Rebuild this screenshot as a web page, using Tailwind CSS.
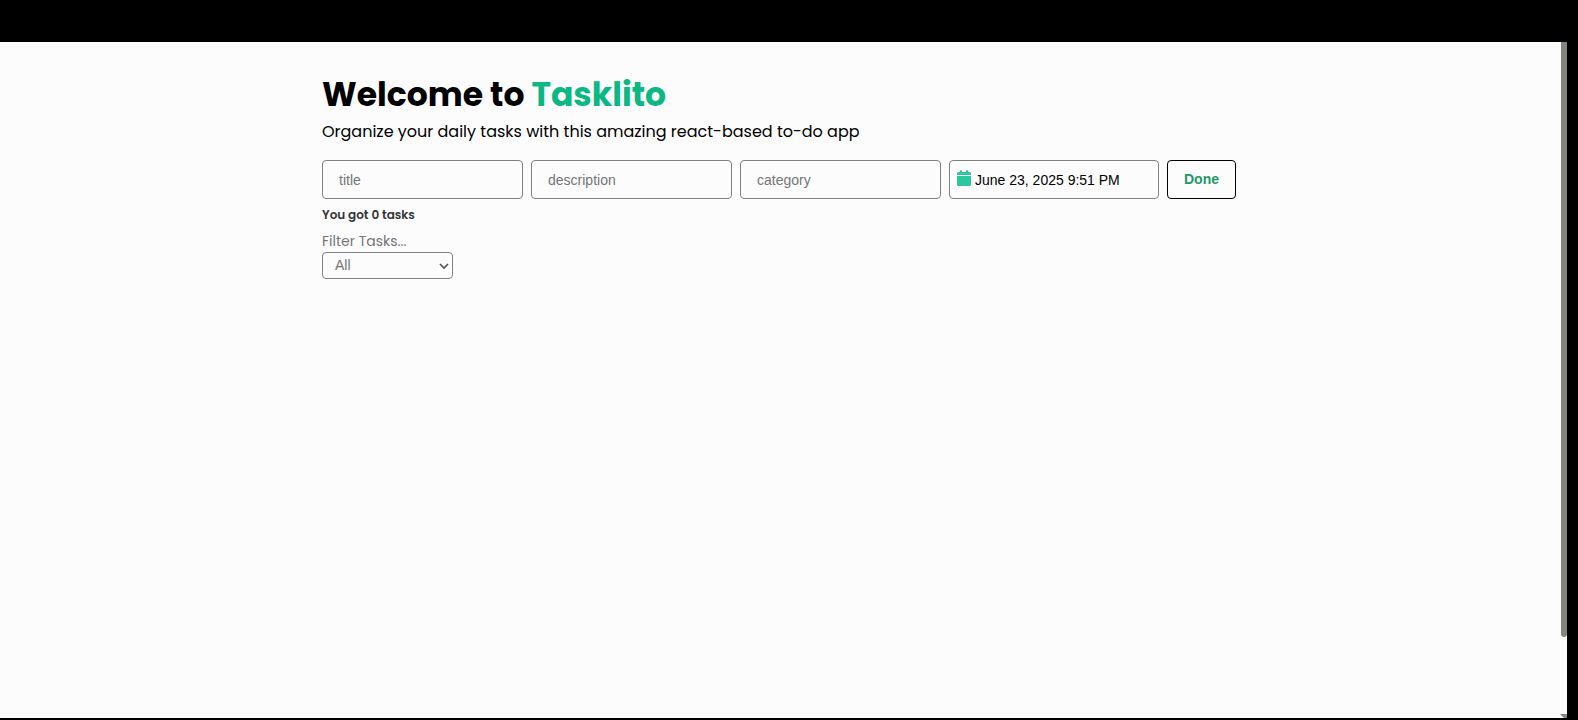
<!DOCTYPE html>
<html lang="en">
<head>
<meta charset="utf-8">
<title>Tasklito</title>
<meta name="viewport" content="width=device-width, initial-scale=1">
<script src="https://cdn.jsdelivr.net/npm/@tailwindcss/browser@4"></script>
</head>
<body class="flex h-screen flex-col overflow-hidden bg-black pt-[42px] pr-[11px] pb-[2px] font-[Poppins,Inter,sans-serif] text-black">
<div class="flex min-h-0 flex-1 bg-[#fcfcfd]">
  <main class="min-w-0 flex-1 pt-8">
    <div class="mx-auto max-w-[914px]">
      <h1 class="text-[33px] leading-[41px] font-bold">Welcome to <span class="text-[#0bb783]">Tasklito</span></h1>
      <p class="mt-1 text-[16px] leading-[25px]">Organize your daily tasks with this amazing react-based to-do app</p>
      <form class="mt-4 flex gap-2 font-['Liberation_Sans',sans-serif] text-[14px]">
        <input aria-label="Title" placeholder="title" class="h-[39px] min-w-0 flex-1 rounded border border-[#808080] px-4 placeholder:text-[#757575]">
        <input aria-label="Description" placeholder="description" class="h-[39px] min-w-0 flex-1 rounded border border-[#808080] px-4 placeholder:text-[#757575]">
        <input aria-label="Category" placeholder="category" class="h-[39px] min-w-0 flex-1 rounded border border-[#808080] px-4 placeholder:text-[#757575]">
        <div class="flex h-[39px] w-[210px] items-center gap-1 rounded border border-[#808080] pl-[7px]">
          <svg class="mb-1 h-4 w-[14px] shrink-0" viewBox="0 0 14 16" fill="#2bc79d" aria-hidden="true"><path d="M3 1a1 1 0 0 1 2 0v1h4V1a1 1 0 0 1 2 0v1h1.500A1.500 1.500 0 0 1 14 3.500V5H0V3.500A1.500 1.500 0 0 1 1.500 2H3zM0 6h14v8.500a1.500 1.500 0 0 1-1.500 1.500h-11A1.500 1.500 0 0 1 0 14.500z"/></svg>
          <input aria-label="Due date" value="June 23, 2025 9:51 PM" class="h-full min-w-0 flex-1">
        </div>
        <button type="button" class="h-[39px] w-[69px] rounded border border-black font-bold text-[#1d9968]">Done</button>
      </form>
      <p class="mt-1 text-[12px] leading-6 font-semibold text-[#333]">You got 0 tasks</p>
      <label for="filter" class="mt-1 block text-[14px] leading-[21px] text-[#757575]">Filter Tasks...</label>
      <div class="grid w-[131px] items-center">
        <select id="filter" class="col-start-1 row-start-1 h-[27px] appearance-none rounded border border-[#808080] pl-3 font-['Liberation_Sans',sans-serif] text-[14px] text-[#757575]"><option>All</option></select>
        <svg class="pointer-events-none col-start-1 row-start-1 mr-1 h-2 w-[10px] justify-self-end" viewBox="0 0 10 8" fill="none" stroke="#555" stroke-width="1.700" aria-hidden="true"><path d="M1 2l4 4 4-4"/></svg>
      </div>
    </div>
  </main>
  <div class="flex w-[9px] flex-col items-end justify-between" aria-hidden="true">
    <div class="h-[88%] w-[6px] rounded-b-full bg-[#85857f]"></div>
    <svg class="h-[4px] w-[7px]" viewBox="0 0 7 4" fill="#858585"><path d="M0 0h7v4H4z"/></svg>
  </div>
</div>
</body>
</html>
